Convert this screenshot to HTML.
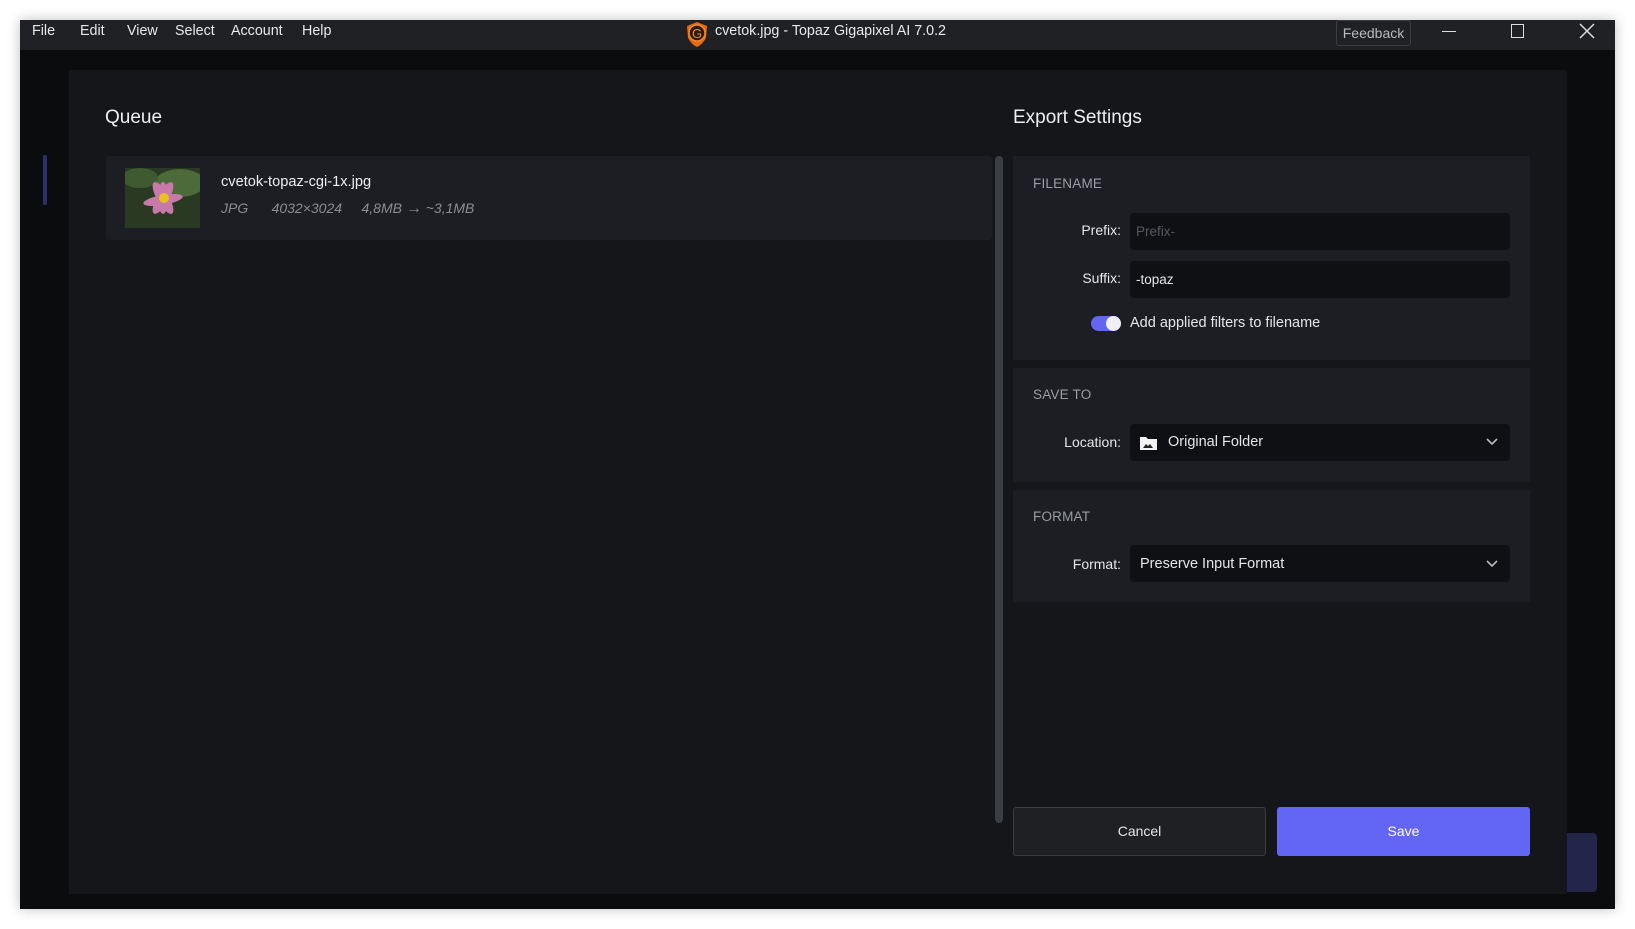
<!DOCTYPE html>
<html><head><meta charset="utf-8"><style>
*{margin:0;padding:0;box-sizing:border-box}
body{width:1635px;height:929px;background:#fff;position:relative;overflow:hidden;font-family:"Liberation Sans",sans-serif;color:#e6e7ea}
.a{position:absolute}
#win{left:20px;top:20px;width:1595px;height:889px;background:#0b0c0e;box-shadow:0 0 12px rgba(0,0,0,.25)}
#tb{left:20px;top:20px;width:1595px;height:30px;background:#1f2125}
.m{top:23px;font-size:14.3px;color:#e8e8e8}
#dlg{left:69px;top:70px;width:1498px;height:824px;background:#14161a}
.h{font-size:19px;color:#eceef0}
.card{background:#1c1e23}
.lab{font-size:13.5px;color:#9a9da3;letter-spacing:.2px}
.fl{font-size:14px;color:#e5e6e8;text-align:right;width:100px}
.in{background:#0f1013;border-radius:4px;height:37px;font-size:13.5px;line-height:37px;padding-left:6px}
</style></head><body>
<div class="a" id="win"></div>
<div class="a" id="tb"></div>
<div class="a m" style="left:32px">File</div>
<div class="a m" style="left:80px">Edit</div>
<div class="a m" style="left:127px">View</div>
<div class="a m" style="left:175px">Select</div>
<div class="a m" style="left:231px">Account</div>
<div class="a m" style="left:302px">Help</div>
<svg class="a" style="left:684px;top:20px" width="26" height="28" viewBox="0 0 26 28"><path d="M13 2 L23 6 L22 18 Q18 25 13 27 Q8 25 4 18 L3 6 Z" fill="#e36a12"/><circle cx="13" cy="13" r="8" fill="#2a1a10" stroke="#f08a2a" stroke-width="1.5"/><text x="13" y="18" font-size="13" fill="#f08a2a" text-anchor="middle" font-family="Liberation Sans">G</text></svg>
<div class="a m" style="left:715px">cvetok.jpg - Topaz Gigapixel AI 7.0.2</div>
<div class="a" style="left:1336px;top:20px;width:75px;height:26px;border:1px solid #3a3d42;border-radius:3px;font-size:14px;color:#b8babe;text-align:center;line-height:25px">Feedback</div>
<div class="a" style="left:1442px;top:31px;width:14px;height:1px;background:#ddd"></div>
<div class="a" style="left:1511px;top:24px;width:13px;height:14px;border:1.5px solid #ddd"></div>
<svg class="a" style="left:1579px;top:23px" width="16" height="16"><path d="M1 1L15 15M15 1L1 15" stroke="#ddd" stroke-width="1.5"/></svg>
<div class="a" style="left:43px;top:155px;width:4px;height:50px;background:#2c2f6a;border-radius:2px"></div>
<div class="a" style="left:1567px;top:833px;width:30px;height:59px;background:#23264a;border-radius:0 4px 4px 0"></div>
<div class="a" id="dlg"></div>
<div class="a h" style="left:105px;top:107px">Queue</div>
<div class="a card" style="left:106px;top:156px;width:886px;height:84px;border-radius:3px"></div>
<svg class="a" style="left:125px;top:168px" width="75" height="60"><rect width="75" height="60" fill="#2a3a22"/><ellipse cx="55" cy="15" rx="25" ry="14" fill="#4d6b3a"/><ellipse cx="15" cy="10" rx="18" ry="10" fill="#3e5a30"/><g fill="#c77aa8"><ellipse cx="38" cy="30" rx="6" ry="18" transform="rotate(-30 38 30)"/><ellipse cx="38" cy="30" rx="6" ry="18" transform="rotate(30 38 30)"/><ellipse cx="38" cy="32" rx="5" ry="20" transform="rotate(80 38 32)"/><ellipse cx="38" cy="30" rx="5" ry="16"/></g><circle cx="39" cy="30" r="5" fill="#e8c020"/></svg>
<div class="a" style="left:221px;top:174px;font-size:14.6px;color:#eceef0">cvetok-topaz-cgi-1x.jpg</div>
<div class="a" style="left:221px;top:200px;font-size:14px;color:#8a8d93;font-style:italic">JPG&nbsp;&nbsp;&nbsp;&nbsp;&nbsp;&nbsp;4032×3024&nbsp;&nbsp;&nbsp;&nbsp;&nbsp;4,8MB <span style="font-size:16px">→</span> ~3,1MB</div>
<div class="a" style="left:995px;top:156px;width:8px;height:667px;background:#3a3d42;border-radius:4px"></div>
<div class="a h" style="left:1013px;top:107px">Export Settings</div>
<div class="a card" style="left:1013px;top:156px;width:517px;height:204px"></div>
<div class="a lab" style="left:1033px;top:176px">FILENAME</div>
<div class="a fl" style="left:1021px;top:222px">Prefix:</div>
<div class="a in" style="left:1130px;top:213px;width:380px;color:#55585e">Prefix-</div>
<div class="a fl" style="left:1021px;top:270px">Suffix:</div>
<div class="a in" style="left:1130px;top:261px;width:380px;color:#e5e6e8">-topaz</div>
<div class="a" style="left:1091px;top:316px;width:30px;height:15px;background:#6366f1;border-radius:8px"></div>
<div class="a" style="left:1106px;top:316px;width:15px;height:15px;background:#f0f0f4;border-radius:50%"></div>
<div class="a" style="left:1130px;top:315px;font-size:14.5px;color:#e5e6e8">Add applied filters to filename</div>
<div class="a card" style="left:1013px;top:368px;width:517px;height:114px"></div>
<div class="a lab" style="left:1033px;top:387px">SAVE TO</div>
<div class="a fl" style="left:1021px;top:434px">Location:</div>
<div class="a in" style="left:1130px;top:424px;width:380px"></div>
<svg class="a" style="left:1139px;top:435px" width="19" height="16"><path d="M1 2h6l2 2h9v11H1z" fill="#f2f2f2"/><path d="M4 13l3-4 2 2 2-2 3 4z" fill="#222"/></svg>
<div class="a" style="left:1168px;top:434px;font-size:14.5px;color:#e5e6e8">Original Folder</div>
<svg class="a" style="left:1485px;top:437px" width="14" height="10"><path d="M2 2l5 5 5-5" stroke="#bbb" stroke-width="1.6" fill="none"/></svg>
<div class="a card" style="left:1013px;top:490px;width:517px;height:112px"></div>
<div class="a lab" style="left:1033px;top:509px">FORMAT</div>
<div class="a fl" style="left:1021px;top:556px">Format:</div>
<div class="a in" style="left:1130px;top:545px;width:380px"></div>
<div class="a" style="left:1140px;top:556px;font-size:14.5px;color:#e5e6e8">Preserve Input Format</div>
<svg class="a" style="left:1485px;top:559px" width="14" height="10"><path d="M2 2l5 5 5-5" stroke="#bbb" stroke-width="1.6" fill="none"/></svg>
<div class="a" style="left:1013px;top:807px;width:253px;height:49px;background:#1e2024;border:1px solid #3a3d42;border-radius:3px;font-size:14px;text-align:center;line-height:47px;color:#e5e6e8">Cancel</div>
<div class="a" style="left:1277px;top:807px;width:253px;height:49px;background:#6366f5;border-radius:3px;font-size:14px;text-align:center;line-height:49px;color:#fff">Save</div>
</body></html>
